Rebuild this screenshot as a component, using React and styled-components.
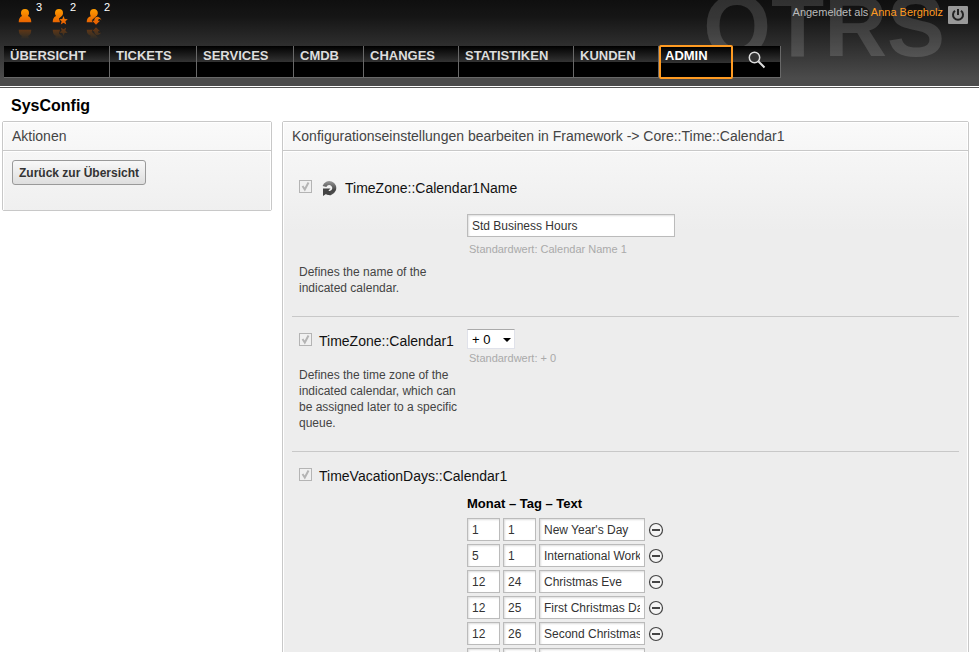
import React from "react";
import styled, { createGlobalStyle, css } from "styled-components";

const GlobalStyle = createGlobalStyle`
  *, *::before, *::after { box-sizing: border-box; }
  html { scrollbar-width: none; }
  body {
    margin: 0;
    background: #fff;
    color: #000;
    font-family: "Liberation Sans", Arial, sans-serif;
    font-size: 12px;
  }
  button, input, select { font-family: inherit; margin: 0; }
`;

const Header = styled.header`
  position: relative;
  overflow: hidden;
  height: 88px;
  background: linear-gradient(#0f0f0f, #161616 20%, #4b4b4b 90%, #4b4b4b);
  border-bottom: 1px solid #555;
  box-shadow: inset 0 -1px 0 #fff;
`;

const Watermark = styled.div`
  position: absolute;
  right: 34px;
  bottom: 17px;
  color: rgba(255, 255, 255, 0.14);
  font-size: 87px;
  font-weight: bold;
  line-height: 88px;
`;

const TopRow = styled.div`
  position: relative;
  display: flex;
  justify-content: space-between;
  align-items: flex-start;
  height: 46px;
  padding: 0 11px 0 18px;
`;

const Toolbar = styled.ul`
  display: flex;
  gap: 10px;
  margin: 0;
  padding: 0;
  list-style: none;
`;

const ToolLink = styled.a`
  display: flex;
  gap: 2px;
  width: 24px;
  color: #fff;
  font-size: 11px;
  line-height: 14px;
  text-decoration: none;
  white-space: nowrap;

  svg { flex: none; }
`;

const Session = styled.div`
  display: flex;
  align-items: flex-start;
  gap: 5px;
  padding-top: 6px;
  color: #bbb;
  font-size: 11px;
  line-height: 12px;

  a { color: #ff9b22; text-decoration: none; }
`;

const LogoutButton = styled.button`
  display: flex;
  width: 20px;
  height: 18px;
  padding: 0;
  border: 0;
  border-radius: 1px;
  background: #999;
  align-items: center;
  justify-content: center;
`;

const Nav = styled.nav`
  position: relative;
  display: flex;
  height: 32px;
  padding-left: 4px;
`;

const NavItem = styled.a`
  width: ${(p) => p.$width}px;
  height: 32px;
  padding: 2px 6px;
  border: solid #686868;
  border-width: 0 1px 1px 0;
  background: linear-gradient(#000, #333 16px, #000 16px);
  color: #ddd;
  font-size: 13px;
  font-weight: bold;
  line-height: 16px;
  text-decoration: none;

  ${(p) =>
    p.$active &&
    css`
      height: 34px;
      margin-top: -1px;
      padding: 1px 4px;
      border: 2px solid #ff9b22;
      border-radius: 2px;
      color: #fff;
    `}
`;

const SearchButton = styled.button`
  display: flex;
  width: 48px;
  height: 32px;
  padding: 5px 0 0 15px;
  border: solid #686868;
  border-width: 0 1px 1px 0;
  background: linear-gradient(#000, #333 16px, #000 16px);
`;

const PageTitle = styled.h1`
  margin: 0;
  padding: 9px 11px 6px;
  font-size: 16px;
  line-height: 18px;
`;

const Columns = styled.div`
  display: grid;
  grid-template-columns: 270px minmax(0, 1fr);
  gap: 10px;
  align-items: start;
  padding: 0 10px 0 2px;
`;

const Panel = styled.section`
  border: 1px solid #c8c8c8;
  border-radius: 2px;
  background: #ededed;
`;

const PanelTitle = styled.h2`
  margin: 0;
  padding: 5px 9px 4px;
  border-bottom: 1px solid #c8c8c8;
  background: linear-gradient(#fafafa, #f6f6f6);
  color: #444;
  font-size: 14px;
  font-weight: normal;
  line-height: 19px;
  box-shadow: inset 1px 1px 0 #fff, inset -1px 0 0 #fff;
`;

const PanelBody = styled.div`
  padding: ${(p) => (p.$form ? "12px 9px 0" : "9px 9px 25px")};
  background: linear-gradient(#f6f6f6, #ededed 80px);
  box-shadow: inset 1px 1px 0 #fff, inset -1px 0 0 #fff;
`;

const ActionButton = styled.button`
  display: block;
  height: 25px;
  padding: 0 6px;
  border: 1px solid #999;
  border-radius: 3px;
  background: linear-gradient(#f8f8f8, #dedede);
  color: #333;
  font-size: 12px;
  font-weight: bold;
`;

const Setting = styled.fieldset`
  display: grid;
  grid-template-columns: 168px minmax(0, 1fr);
  margin: 0;
  padding: ${(p) => p.$padding};
  border: 0;
  border-bottom: 1px solid #c8c8c8;

  &:last-child { border-bottom: 0; }
`;

const SettingLabel = styled.label`
  display: flex;
  grid-column: ${(p) => (p.$wide ? "1 / -1" : "1")};
  align-items: flex-start;
  gap: 7px;
  padding-top: 4px;
  padding-bottom: 2px;
  color: #111;
  font-size: 14px;
  line-height: 16px;
  white-space: nowrap;
`;

const TickBox = styled.span`
  display: grid;
  flex: none;

  > * { grid-area: 1 / 1; }
`;

const Tick = styled.input`
  width: 13px;
  height: 13px;
  appearance: none;
  border: 1px solid #b4b4b4;
  background: #f0f0f0;
`;

const ResetButton = styled.button`
  display: flex;
  width: 19px;
  height: 17px;
  padding: 1px 0 0 3px;
  border: 0;
  background: none;
`;

const Field = styled.div`
  grid-column: 2;
  margin-top: ${(p) => p.$top}px;
`;

const TextInput = styled.input`
  width: ${(p) => p.$width}px;
  height: 23px;
  padding: 0 4px;
  border: 1px solid #bbb;
  border-radius: 0;
  background: #fff;
  box-shadow: inset 1px 1px 2px #ddd;
  color: #333;
  font-size: 12px;
`;

const SelectWrap = styled.div`
  display: grid;
  width: 48px;

  > * { grid-area: 1 / 1; }

  svg { place-self: center end; margin: 2px 4px 0 0; pointer-events: none; }
`;

const Select = styled.select`
  width: 48px;
  height: 20px;
  padding: 0 4px;
  appearance: none;
  border: 1px solid #e0e2ea;
  border-top-color: #aaa;
  border-radius: 0;
  background: #fff;
  color: #000;
  font-size: 13px;
`;

const DefaultValue = styled.p`
  margin: 0;
  padding: ${(p) => p.$top}px 2px 0;
  color: #aaa;
  font-size: 11px;
  line-height: 13px;
`;

const Description = styled.p`
  grid-column: 1;
  margin: ${(p) => p.$top}px 0 0;
  color: #444;
  font-size: 12px;
  line-height: 16px;
`;

const VacationTitle = styled.h3`
  margin: 0 0 6px;
  font-size: 13px;
  line-height: 16px;
`;

const VacationRow = styled.div`
  display: flex;
  align-items: center;
  gap: 3px;
  margin-bottom: 3px;
`;

const RemoveButton = styled.button`
  display: flex;
  width: 16px;
  height: 16px;
  padding: 0;
  border: 0;
  background: none;
`;

const BODIES = {
  none: "M7 0a4 4 0 0 1 4 4c0 1.300-.5 2.300-1.200 3 2.400.8 3.500 2.800 3.500 6.300H.7C.7 9.800 1.800 7.800 4.200 7 3.500 6.300 3 5.300 3 4a4 4 0 0 1 4-4z",
  star: "M7 0a4 4 0 0 1 4 4c0 1.300-.5 2.300-1.200 3L7 9.500 8 13.300H.7C.7 9.800 1.800 7.800 4.200 7 3.500 6.300 3 5.300 3 4a4 4 0 0 1 4-4z",
  arrow: "M8 0a3.800 3.800 0 0 1 3.800 4c0 1.600-.7 2.800-1.800 3.600L6 11l1 2.300H.7c0-3.500 1.300-5.300 4.100-6C4.300 6.500 4 5.300 4 4a4 4 0 0 1 4-4z",
};

const BADGES = {
  star: "M11.500 7l1.200 2.900 3.100.3-2.400 2.100.8 3.100-2.700-1.700-2.700 1.700.8-3.100-2.400-2.100 3.100-.3z",
  arrow: "M15.500 11.500c-1-2-3.300-2.200-3.500.3h2L10 15.800 6.200 11.800h2C8.200 7 13.500 6 15.500 11.500z",
};

const PersonShape = ({ badge, id }) => (
  <g>
    <path d={BODIES[badge]} fill={`url(#${id})`} />
    {BADGES[badge] && (
      <path d={BADGES[badge]} fill={`url(#${id})`} stroke="#1b1b1b" strokeWidth="1" paintOrder="stroke" />
    )}
  </g>
);

const PersonIcon = ({ badge }) => {
  const id = `orange-${badge}`;
  return (
    <svg width="16" height="40" viewBox="0 0 16 40" aria-hidden="true">
      <defs>
        <linearGradient id={id} x1="0" y1="0" x2="0" y2="15" gradientUnits="userSpaceOnUse">
          <stop offset="0" stopColor="#ff9c00" />
          <stop offset="1" stopColor="#e65c00" />
        </linearGradient>
        <linearGradient id={`${id}-fade`} x1="0" y1="27" x2="0" y2="39" gradientUnits="userSpaceOnUse">
          <stop offset="0" stopColor="#fff" stopOpacity="0.4" />
          <stop offset="1" stopColor="#fff" stopOpacity="0" />
        </linearGradient>
        <mask id={`${id}-mask`} maskUnits="userSpaceOnUse" x="0" y="26" width="16" height="14">
          <rect y="26" width="16" height="14" fill={`url(#${id}-fade)`} />
        </mask>
      </defs>
      <g transform="translate(0 9)"><PersonShape badge={badge} id={id} /></g>
      <g mask={`url(#${id}-mask)`}>
        <g transform="translate(0 43) scale(1 -1)"><PersonShape badge={badge} id={id} /></g>
      </g>
    </svg>
  );
};

const PowerIcon = () => (
  <svg width="14" height="14" viewBox="0 0 14 14" fill="none" stroke="#222" strokeWidth="2" aria-hidden="true">
    <path d="M4 2.800a5 5 0 1 0 6 0" />
    <path d="M7 1v6" />
  </svg>
);

const SearchIcon = () => (
  <svg width="18" height="18" viewBox="0 0 18 18" fill="none" aria-hidden="true">
    <circle cx="6.500" cy="6.500" r="5.200" fill="#333" stroke="#ddd" strokeWidth="1.500" />
    <path d="M10.500 10.500l6 6" stroke="#ddd" strokeWidth="2" />
  </svg>
);

const CheckIcon = () => (
  <svg width="13" height="13" viewBox="0 0 13 13" fill="none" stroke="#b4b4b4" strokeWidth="2" aria-hidden="true">
    <path d="M3.500 6l2.300 3.500L9.500 2.500" />
  </svg>
);

const ResetIcon = () => (
  <svg width="15" height="16" viewBox="0 0 15 16" aria-hidden="true">
    <defs>
      <linearGradient id="reset-ring" x1="0" y1="0" x2="0" y2="15" gradientUnits="userSpaceOnUse">
        <stop offset="0" stopColor="#999" />
        <stop offset="0.6" stopColor="#444" />
        <stop offset="1" stopColor="#555" />
      </linearGradient>
    </defs>
    <path d="M2.500 5.500A5 5 0 1 1 5 11.500" fill="none" stroke="url(#reset-ring)" strokeWidth="4" />
    <path d="M1 15V7.500h7.500L6.500 9.500l2 2.500v2.500L4 13z" fill="#444" />
  </svg>
);

const ArrowIcon = () => (
  <svg width="8" height="4" viewBox="0 0 8 4" aria-hidden="true"><path d="M0 0h8L4 4z" /></svg>
);

const RemoveIcon = () => (
  <svg width="16" height="16" viewBox="0 0 16 16" fill="none" stroke="#444" aria-hidden="true">
    <circle cx="8" cy="8" r="6.500" fill="#f4f4f4" strokeWidth="1.200" />
    <path d="M4 8h8" strokeWidth="2" />
  </svg>
);

const TOOLS = [
  { badge: "none", count: 3, label: "Tickets" },
  { badge: "star", count: 2, label: "Neue Tickets" },
  { badge: "arrow", count: 2, label: "Erinnerungen" },
];

const MENU = [
  { label: "ÜBERSICHT", width: 106 },
  { label: "TICKETS", width: 87 },
  { label: "SERVICES", width: 97 },
  { label: "CMDB", width: 70 },
  { label: "CHANGES", width: 95 },
  { label: "STATISTIKEN", width: 115 },
  { label: "KUNDEN", width: 85 },
  { label: "ADMIN", width: 74, active: true },
];

const VACATIONS = [
  ["1", "1", "New Year's Day"],
  ["5", "1", "International Workers' Day"],
  ["12", "24", "Christmas Eve"],
  ["12", "25", "First Christmas Day"],
  ["12", "26", "Second Christmas Day"],
  ["", "", ""],
];

const SettingHeading = ({ name, wide, resettable }) => (
  <SettingLabel $wide={wide}>
    <TickBox>
      <Tick type="checkbox" defaultChecked disabled />
      <CheckIcon />
    </TickBox>
    {resettable && (
      <ResetButton type="button" aria-label="Zurücksetzen"><ResetIcon /></ResetButton>
    )}
    {name}
  </SettingLabel>
);

export default function App() {
  return (
    <>
      <GlobalStyle />
      <Header>
        <Watermark>OTRS</Watermark>
        <TopRow>
          <Toolbar>
            {TOOLS.map((tool) => (
              <li key={tool.badge}>
                <ToolLink href="#" aria-label={tool.label}>
                  <PersonIcon badge={tool.badge} />
                  {tool.count}
                </ToolLink>
              </li>
            ))}
          </Toolbar>
          <Session>
            <span>Angemeldet als <a href="#">Anna Bergholz</a></span>
            <LogoutButton type="button" aria-label="Abmelden"><PowerIcon /></LogoutButton>
          </Session>
        </TopRow>
        <Nav>
          {MENU.map((item) => (
            <NavItem key={item.label} href="#" $width={item.width} $active={item.active}>
              {item.label}
            </NavItem>
          ))}
          <SearchButton type="button" aria-label="Suche"><SearchIcon /></SearchButton>
        </Nav>
      </Header>

      <PageTitle>SysConfig</PageTitle>

      <Columns>
        <Panel>
          <PanelTitle>Aktionen</PanelTitle>
          <PanelBody>
            <ActionButton type="button">Zurück zur Übersicht</ActionButton>
          </PanelBody>
        </Panel>

        <Panel as="main">
          <PanelTitle>
            Konfigurationseinstellungen bearbeiten in Framework -&gt; Core::Time::Calendar1
          </PanelTitle>
          <PanelBody $form>
            <Setting $padding="13px 7px 20px">
              <SettingHeading name="TimeZone::Calendar1Name" wide resettable />
              <Field $top={15}>
                <TextInput $width={208} aria-label="TimeZone::Calendar1Name" defaultValue="Std Business Hours" />
                <DefaultValue $top={6}>Standardwert: Calendar Name 1</DefaultValue>
              </Field>
              <Description $top={8}>Defines the name of the indicated calendar.</Description>
            </Setting>

            <Setting $padding="12px 7px 20px">
              <SettingHeading name="TimeZone::Calendar1" />
              <Field $top={0}>
                <SelectWrap>
                  <Select aria-label="TimeZone::Calendar1" defaultValue="0">
                    <option value="0">+ 0</option>
                  </Select>
                  <ArrowIcon />
                </SelectWrap>
                <DefaultValue $top={3}>Standardwert: + 0</DefaultValue>
              </Field>
              <Description $top={2}>
                Defines the time zone of the indicated calendar, which can be assigned later to a specific queue.
              </Description>
            </Setting>

            <Setting $padding="12px 7px 20px">
              <SettingHeading name="TimeVacationDays::Calendar1" wide />
              <Field $top={10}>
                <VacationTitle>Monat – Tag – Text</VacationTitle>
                {VACATIONS.map(([month, day, text], index) => (
                  <VacationRow key={index}>
                    <TextInput $width={33} aria-label="Monat" defaultValue={month} />
                    <TextInput $width={33} aria-label="Tag" defaultValue={day} />
                    <TextInput $width={106} aria-label="Text" defaultValue={text} />
                    <RemoveButton type="button" aria-label="Entfernen"><RemoveIcon /></RemoveButton>
                  </VacationRow>
                ))}
              </Field>
            </Setting>
          </PanelBody>
        </Panel>
      </Columns>
    </>
  );
}
